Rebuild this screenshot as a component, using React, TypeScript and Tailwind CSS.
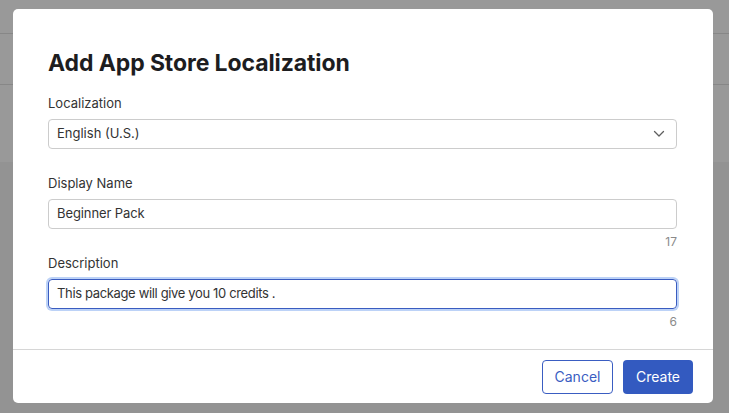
import React from "react";

function Chevron() {
  return (
    <svg width="12" height="8" viewBox="0 0 12 8" fill="none">
      <path d="M1.5 1.5 L6 6 L10.5 1.5" stroke="#5f5f5f" strokeWidth="1.3" strokeLinecap="round" strokeLinejoin="round" />
    </svg>
  );
}

export default function App() {
  const font = { fontFamily: "Inter, 'Noto Sans', 'Liberation Sans', sans-serif" };
  return (
    <div className="relative w-[729px] h-[413px] overflow-hidden bg-[#939393]" style={font}>
      {/* background page under overlay */}
      <div className="flex flex-col">
        <div className="h-[34px] bg-[#999999] border-b border-[#878787]" />
        <div className="h-[51px] bg-[#999999] border-b border-[#878787]" />
        <div className="h-[77px] bg-[#999999]" />
      </div>

      {/* modal */}
      <div className="absolute left-[13px] top-[9px] w-[700px] h-[394px] bg-white rounded-[5px] flex flex-col">
        <div className="flex-1 pl-[35px] pr-[36px] pt-[40px]">
          <h1 className="text-[23px] leading-[28px] font-bold text-[#1d1d1f] tracking-[-0.1px]">
            Add App Store Localization
          </h1>

          <div className="mt-[17px]">
            <div className="text-[13px] leading-[18px] text-[#333333]">Localization</div>
            <div className="mt-[7px] h-[30px] border border-[#cccccc] rounded-[4px] flex items-center justify-between pl-[8px] pr-[11px]">
              <span className="text-[13px] text-[#333333]">English (U.S.)</span>
              <Chevron />
            </div>
          </div>

          <div className="mt-[25px]">
            <div className="text-[13px] leading-[18px] text-[#333333]">Display Name</div>
            <div className="mt-[7px] h-[30px] border border-[#cccccc] rounded-[4px] flex items-center pl-[8px]">
              <span className="text-[13px] text-[#333333] tracking-[-0.1px]">Beginner Pack</span>
            </div>
            <div className="mt-[5px] text-right text-[12px] leading-[16px] text-[#8a8a8a]">17</div>
          </div>

          <div className="mt-[4px]">
            <div className="text-[13px] leading-[18px] text-[#333333]">Description</div>
            <div className="mt-[7px] h-[30px] border border-[#3a5cc0] rounded-[4px] flex items-center pl-[8px] shadow-[0_0_0_2px_#bcd2f7]">
              <span className="text-[13px] text-[#333333] tracking-[-0.35px]">This package will give you 10 credits .</span>
            </div>
            <div className="mt-[5px] text-right text-[12px] leading-[16px] text-[#8a8a8a]">6</div>
          </div>
        </div>

        <div className="border-t border-[#d6d6d6] h-[54px] flex items-center justify-end gap-[10px] pr-[20px]">
          <button className="h-[34px] w-[71px] rounded-[4px] border border-[#3a5dc2] bg-white text-[#3a5dc2] text-[14px]">
            Cancel
          </button>
          <button className="h-[34px] w-[70px] rounded-[4px] bg-[#335ac0] text-white text-[14px]">
            Create
          </button>
        </div>
      </div>
    </div>
  );
}
